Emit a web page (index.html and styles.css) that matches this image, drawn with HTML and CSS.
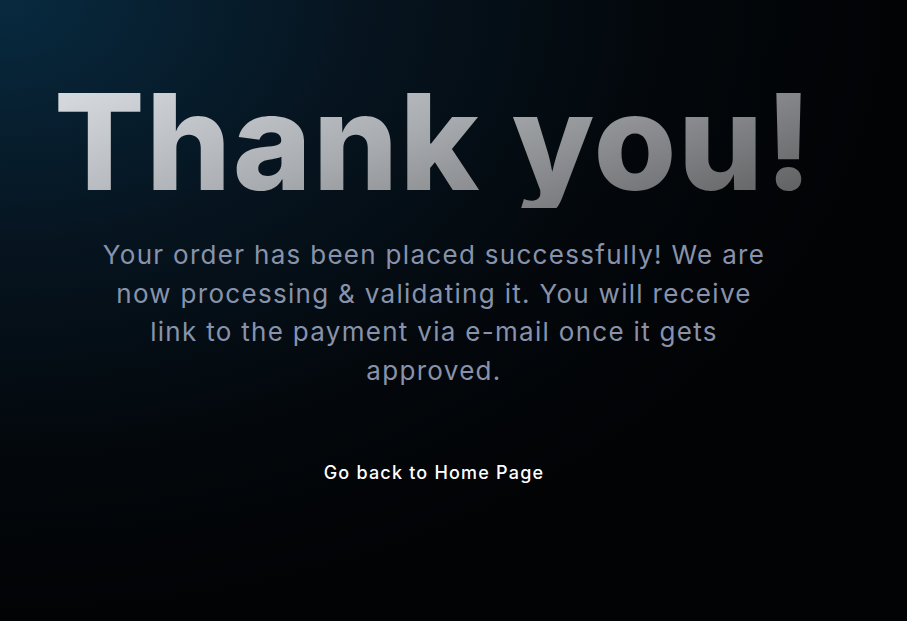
FILE: index.html
```html
<!DOCTYPE html>
<html lang="en">
<head>
  <meta charset="UTF-8" />
  <meta name="viewport" content="width=device-width, initial-scale=1.0"/>
  <title>Thank you!</title>
  <link rel="stylesheet" href="styles.css">
</head>
<body>
  <main class="thanks">
    <h1 class="thanks-title">Thank you!</h1>
    <p class="thanks-text">
      Your order has been placed successfully! We are now processing &amp; validating it. You will receive link to the payment via e-mail once it gets approved.
    </p>
    <a class="home-link" href="#">Go back to Home Page</a>
  </main>
</body>
</html>
```

FILE: styles.css
```css
html, body {
  height: 100%;
}
body {
  margin: 0;
  font-family: Inter, "Noto Sans", sans-serif;
  background-color: #020305;
  background-image: radial-gradient(ellipse 900px 620px at 0 0, #082a40 0%, #06141f 40%, #03070b 75%, #020305 100%);
  overflow: hidden;
}
.thanks {
  width: 868px;
  padding-top: 74px;
  display: flex;
  flex-direction: column;
  align-items: center;
  text-align: center;
}
.thanks-title {
  margin: 0;
  font-size: 134px;
  line-height: 1;
  font-weight: 800;
  letter-spacing: 1.5px;
  background: linear-gradient(160deg, #dcdfe3 0%, #a9acb0 45%, #5a5a5c 100%);
  -webkit-background-clip: text;
  background-clip: text;
  color: transparent;
}
.thanks-text {
  margin: 28px 0 0;
  max-width: 675px;
  font-size: 26px;
  line-height: 38.5px;
  letter-spacing: 1.3px;
  color: #8893ab;
}
.home-link {
  margin-top: 72px;
  font-size: 18px;
  font-weight: 500;
  letter-spacing: 1.2px;
  color: #fff;
  text-decoration: none;
}
```
